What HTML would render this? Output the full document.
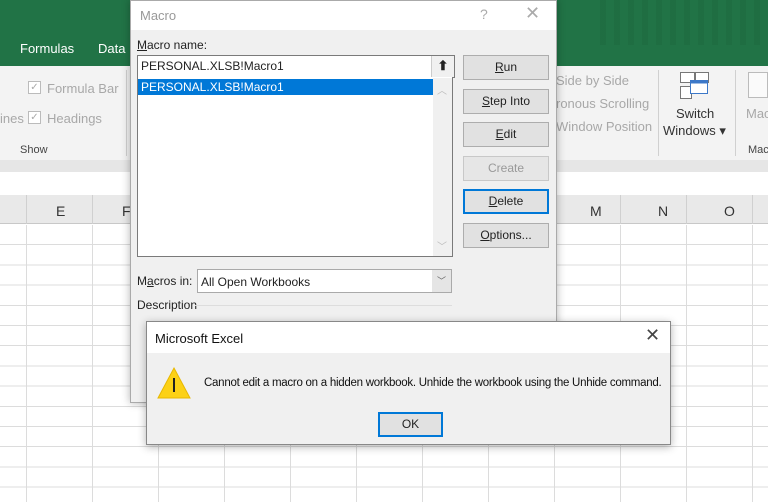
<!DOCTYPE html>
<html><head><style>
*{box-sizing:border-box;margin:0;padding:0}
body{width:768px;height:502px;overflow:hidden;position:relative;background:#fff;font-family:"Liberation Sans",sans-serif;font-size:12px;color:#222}
.a{position:absolute}
.btn{position:absolute;left:463px;width:86px;height:25px;background:#e1e1e1;border:1px solid #adadad;text-align:center;line-height:23px;font-size:12px;color:#222}
.g{color:#a8a8a8}
</style></head><body>
<div class="a" style="left:0;top:0;width:768px;height:66px;background:#217346"></div>
<div class="a" style="left:600px;top:0;width:160px;height:45px;background:repeating-linear-gradient(90deg,#1e6b40 0 6px,#217346 6px 14px);opacity:.7"></div>
<div class="a" style="left:20px;top:41px;color:#fff;font-size:13px">Formulas</div>
<div class="a" style="left:98px;top:41px;color:#fff;font-size:13px">Data</div>
<div class="a" style="left:0;top:66px;width:768px;height:94px;background:#f3f3f3"></div>
<div class="a" style="left:0;top:160px;width:768px;height:12px;background:#e6e6e6"></div>
<div class="a" style="left:0;top:172px;width:768px;height:23px;background:#fff"></div>
<div class="a" style="left:0;top:195px;width:768px;height:29px;background:#e9e9e9;border-bottom:1px solid #c8c8c8"></div>
<div class="a" style="left:28px;top:81px;width:13px;height:13px;border:1px solid #bbb;background:#fff;color:#aaa;font-size:10px;line-height:11px;text-align:center">✓</div>
<div class="a g" style="left:47px;top:81px;font-size:13px">Formula Bar</div>
<div class="a g" style="left:0;top:111px;font-size:13px">ines</div>
<div class="a" style="left:28px;top:111px;width:13px;height:13px;border:1px solid #bbb;background:#fff;color:#aaa;font-size:10px;line-height:11px;text-align:center">✓</div>
<div class="a g" style="left:47px;top:111px;font-size:13px">Headings</div>
<div class="a" style="left:20px;top:144px;font-size:11px;color:#444">Show</div>
<div class="a" style="left:126px;top:70px;width:1px;height:86px;background:#d0d0d0"></div>
<div class="a g" style="left:556px;top:73px;font-size:13px">Side by Side</div>
<div class="a g" style="left:556px;top:96px;font-size:13px">ronous Scrolling</div>
<div class="a g" style="left:556px;top:119px;font-size:13px">Window Position</div>
<div class="a" style="left:658px;top:70px;width:1px;height:86px;background:#d0d0d0"></div>
<svg class="a" style="left:680px;top:72px" width="30" height="28"><rect x="0.5" y="0.5" width="14" height="10" fill="#fff" stroke="#777"/><rect x="15.5" y="0.5" width="13" height="10" fill="#fff" stroke="#777"/><rect x="0.5" y="14.5" width="11" height="12" fill="#fff" stroke="#777"/><rect x="10.5" y="8.5" width="17" height="13" fill="#fff" stroke="#3c78c8"/><rect x="10.5" y="8.5" width="17" height="3" fill="#3c78c8"/></svg>
<div class="a" style="left:676px;top:106px;font-size:13px;color:#333">Switch</div>
<div class="a" style="left:663px;top:123px;font-size:13px;color:#333">Windows ▾</div>
<div class="a" style="left:735px;top:70px;width:1px;height:86px;background:#d0d0d0"></div>
<div class="a" style="left:748px;top:72px;width:20px;height:26px;border:1px solid #bbb;background:#fafafa"></div>
<div class="a g" style="left:746px;top:106px;font-size:13px">Mac</div>
<div class="a" style="left:748px;top:144px;font-size:11px;color:#444">Mac</div>
<div class="a" style="left:0;top:195px;width:768px;height:29px;background:repeating-linear-gradient(90deg,transparent 0 26px,#d0d0d0 26px 27px,transparent 27px 66px);background-size:66px 29px"></div>
<div class="a" style="left:56px;top:203px;font-size:14px;color:#333">E</div>
<div class="a" style="left:122px;top:203px;font-size:14px;color:#333">F</div>
<div class="a" style="left:590px;top:203px;font-size:14px;color:#333">M</div>
<div class="a" style="left:658px;top:203px;font-size:14px;color:#333">N</div>
<div class="a" style="left:724px;top:203px;font-size:14px;color:#333">O</div>
<div class="a" style="left:0;top:225px;width:768px;height:277px;background-image:repeating-linear-gradient(180deg,transparent 0 19.2px,#dcdcdc 19.2px 20.2px),repeating-linear-gradient(90deg,transparent 0 26px,#dcdcdc 26px 27px,transparent 27px 66px)"></div>

<div class="a" style="left:130px;top:0;width:427px;height:403px;background:#f0f0f0;border:1px solid #aaa;box-shadow:0 0 8px rgba(0,0,0,.3)">
<div class="a" style="left:0;top:0;width:425px;height:29px;background:#fff"></div>
<div class="a" style="left:9px;top:7px;font-size:13px;color:#999">Macro</div>
<div class="a" style="left:349px;top:5px;font-size:14px;color:#aaa">?</div>
<div class="a" style="left:394px;top:2px;font-size:18px;color:#aaa">✕</div>
</div>
<div class="a" style="left:137px;top:38px;font-size:12px"><u>M</u>acro name:</div>
<div class="a" style="left:137px;top:55px;width:318px;height:23px;background:#fff;border:1px solid #7a7a7a"></div>
<div class="a" style="left:141px;top:59px;font-size:12px">PERSONAL.XLSB!Macro1</div>
<div class="a" style="left:431px;top:56px;width:23px;height:21px;background:#f0f0f0;border-left:1px solid #ccc;text-align:center;font-weight:bold;font-size:13px;line-height:19px">⬆</div>
<div class="a" style="left:137px;top:77px;width:316px;height:180px;background:#fff;border:1px solid #7a7a7a;border-top:none"></div>
<div class="a" style="left:138px;top:79px;width:295px;height:16px;background:#0078d7;color:#fff;font-size:12px;padding-left:3px;line-height:16px">PERSONAL.XLSB!Macro1</div>
<div class="a" style="left:433px;top:78px;width:19px;height:178px;background:#f0f0f0"></div>
<div class="a" style="left:437px;top:82px;font-size:10px;color:#bbb">︿</div>
<div class="a" style="left:437px;top:238px;font-size:10px;color:#bbb">﹀</div>
<div class="btn" style="top:55px"><u>R</u>un</div>
<div class="btn" style="top:89px"><u>S</u>tep Into</div>
<div class="btn" style="top:122px"><u>E</u>dit</div>
<div class="btn" style="top:156px;color:#999;border-color:#c8c8c8;background:#e6e6e6">Create</div>
<div class="btn" style="top:189px;border:2px solid #0078d7;line-height:21px"><u>D</u>elete</div>
<div class="btn" style="top:223px"><u>O</u>ptions...</div>
<div class="a" style="left:137px;top:274px">M<u>a</u>cros in:</div>
<div class="a" style="left:197px;top:269px;width:255px;height:24px;background:#fff;border:1px solid #aaa"></div>
<div class="a" style="left:201px;top:275px">All Open Workbooks</div>
<div class="a" style="left:432px;top:270px;width:19px;height:22px;background:#e5e5e5;text-align:center;color:#666;font-size:9px;line-height:22px">﹀</div>
<div class="a" style="left:137px;top:298px">Description</div>
<div class="a" style="left:195px;top:305px;width:257px;height:1px;background:#ddd"></div>

<div class="a" style="left:146px;top:321px;width:525px;height:124px;background:#f0f0f0;border:1px solid #888;box-shadow:0 2px 8px rgba(0,0,0,.3)">
<div class="a" style="left:0;top:0;width:523px;height:31px;background:#fff"></div>
<div class="a" style="left:8px;top:9px;font-size:13px;color:#111">Microsoft Excel</div>
<div class="a" style="left:498px;top:3px;font-size:18px;color:#444">✕</div>
<svg class="a" style="left:10px;top:44px" width="34" height="34"><path d="M17 2 L33 32 L1 32 Z" fill="#fcd116" stroke="#e8b800"/><rect x="16" y="12" width="2" height="14" fill="#222"/></svg>
<div class="a" style="left:57px;top:55px;font-size:11.5px;color:#111;white-space:nowrap;letter-spacing:-0.26px">Cannot edit a macro on a hidden workbook. Unhide the workbook using the Unhide command.</div>
<div class="a" style="left:231px;top:90px;width:65px;height:25px;background:#e1e1e1;border:2px solid #0078d7;text-align:center;line-height:21px">OK</div>
</div>
</body></html>
